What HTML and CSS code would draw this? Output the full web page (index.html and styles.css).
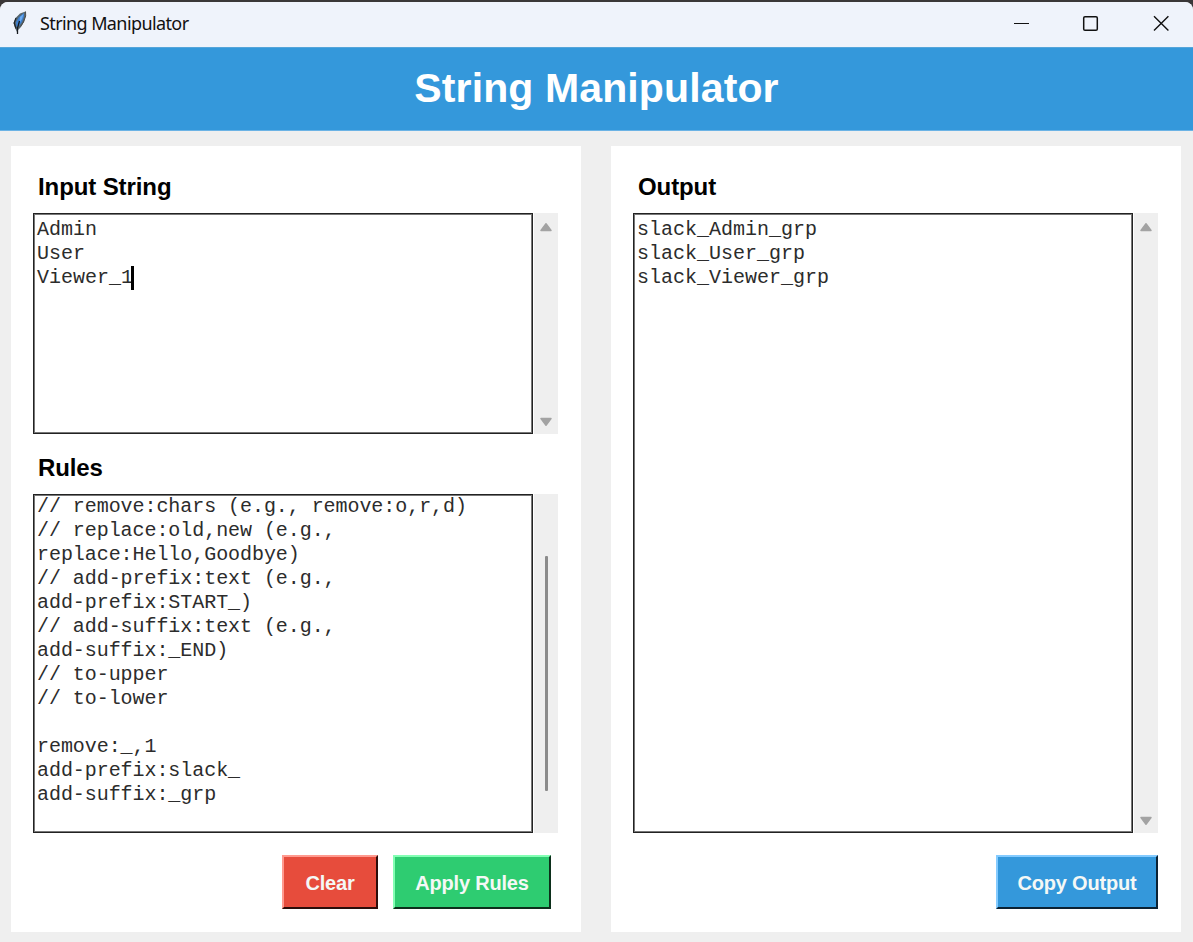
FILE: index.html
```html
<!DOCTYPE html>
<html lang="en">
<head>
<meta charset="utf-8">
<title>String Manipulator</title>
<link rel="stylesheet" href="styles.css">
</head>
<body>
<div class="window">
  <header class="titlebar">
    <svg class="feather" width="16" height="26" viewBox="0 0 16 26">
      <path d="M5 22 3 18 1.500 13 3.500 8 8 3.500 13.500 1.500 13.500 6 12 12 9 17 6 20Z" fill="#56666f"/>
      <path d="M4.500 17 4 12 7 7 12 3 12 6.500 10 12 7 16Z" fill="#3c7fd0"/>
      <path d="M8 7 11.500 4 10 9 7.500 13Z" fill="#6aaaf0"/>
      <path d="M13.500 1.500 13.700 6 11.500 12 8.500 16.500" fill="none" stroke="#4a4c4e" stroke-width="1"/>
      <path d="M7.500 11 5.500 18 5.500 24" fill="none" stroke="#15191d" stroke-width="1.300"/>
      <path d="M4 8 2.200 13 4 18.500" fill="none" stroke="#1f2327" stroke-width="1.200"/>
    </svg>
    <span class="caption">String Manipulator</span>
    <svg class="controls" width="160" height="20" viewBox="0 0 160 20" fill="none" stroke="#111">
      <path d="M1 10.5H16" stroke-width="1.1"/>
      <rect x="70.7" y="3.7" width="13.6" height="13.6" rx="1.3" stroke-width="1.5"/>
      <path d="M141 3.2 155.400 17.600M155.400 3.200 141 17.600" stroke-width="1.4"/>
    </svg>
  </header>
  <div class="banner"><h1>String Manipulator</h1></div>
  <main class="content">
    <section class="panel">
      <h2>Input String</h2>
      <div class="field field-input">
        <pre class="text">Admin
User
Viewer_1<span class="caret"></span></pre>
        <div class="scrollbar">
          <svg width="14" height="10" viewBox="0 0 14 10"><path d="M2 8.500 7 1.800 12 8.500Z" class="arrow"/></svg>
          <svg width="14" height="10" viewBox="0 0 14 10"><path d="M2 1.500 7 8.200 12 1.500Z" class="arrow"/></svg>
        </div>
      </div>
      <h2 class="rules-title">Rules</h2>
      <div class="field field-rules">
        <pre class="text">// remove:chars (e.g., remove:o,r,d)
// replace:old,new (e.g.,
replace:Hello,Goodbye)
// add-prefix:text (e.g.,
add-prefix:START_)
// add-suffix:text (e.g.,
add-suffix:_END)
// to-upper
// to-lower

remove:_,1
add-prefix:slack_
add-suffix:_grp</pre>
        <div class="scrollbar scrollbar-thumb"><div class="thumb"></div></div>
      </div>
      <div class="actions actions-left">
        <button class="btn btn-clear">Clear</button>
        <button class="btn btn-apply">Apply Rules</button>
      </div>
    </section>
    <section class="panel">
      <h2>Output</h2>
      <div class="field field-output">
        <pre class="text">slack_Admin_grp
slack_User_grp
slack_Viewer_grp</pre>
        <div class="scrollbar">
          <svg width="14" height="10" viewBox="0 0 14 10"><path d="M2 8.500 7 1.800 12 8.500Z" class="arrow"/></svg>
          <svg width="14" height="10" viewBox="0 0 14 10"><path d="M2 1.500 7 8.200 12 1.500Z" class="arrow"/></svg>
        </div>
      </div>
      <div class="actions">
        <button class="btn btn-copy">Copy Output</button>
      </div>
    </section>
  </main>
</div>
</body>
</html>
```

FILE: styles.css
```css
* { box-sizing: border-box; }
body { margin: 0; background: #3a3738; font-family: "Liberation Sans", Arial, sans-serif; overflow: hidden; }
.window { width: 1193px; height: 940px; margin-top: 2px; background: #efefef; border-radius: 8px 8px 0 0; overflow: hidden; }
.titlebar { height: 45px; background: #eff3fb; display: flex; align-items: center; padding: 0 20px 4px 12px; }
.feather { display: block; margin-right: 12px; }
.caption { font: 18px/26px "Noto Sans", sans-serif; letter-spacing: -0.6px; color: #111; white-space: nowrap; }
.controls { margin-left: auto; }
.banner { height: 84px; background: #3498db; border-top: 1px solid #55a5da; border-bottom: 1px solid #6bb3e5; display: flex; justify-content: center; }
h1 { margin: 0; color: #fff; font-size: 41px; line-height: 80px; letter-spacing: 0.12px; white-space: nowrap; }
.content { display: flex; gap: 30px; padding: 15px 12px 0 11px; }
.panel { width: 570px; height: 786px; background: #fff; padding: 26px 22px 0; }
h2 { margin: 0 0 11px 5px; font-size: 24px; line-height: 30px; letter-spacing: -0.1px; color: #000; white-space: nowrap; }
.rules-title { margin-top: 19px; }
.field { display: flex; gap: 1px; width: 525px; }
.field-input { height: 221px; }
.field-rules { height: 339px; }
.field-output { height: 620px; }
.text { width: 500px; margin: 0; padding: 4px 0 0 3px; border: 1px solid #222; box-shadow: inset 0 0 0 1px #777; font: 20px/24px "Liberation Mono", monospace; color: #2c2c2c; overflow: hidden; }
.field-rules .text { padding-top: 0; letter-spacing: -0.06px; }
.caret { display: inline-block; width: 3px; height: 24px; margin-left: -2px; background: #000; vertical-align: top; }
.scrollbar { width: 24px; background: #efefef; display: flex; flex-direction: column; align-items: center; justify-content: space-between; padding: 9px 0 7px; }
.arrow { fill: #a3a3a3; stroke: #a3a3a3; stroke-width: 1.5; stroke-linejoin: round; }
.scrollbar-thumb { padding: 62px 0 0; justify-content: flex-start; }
.thumb { width: 3px; height: 235px; background: #8b8b8b; border-radius: 1px; }
.actions { display: flex; justify-content: flex-end; gap: 15px; margin-top: 22px; }
.actions-left { padding-right: 8px; }
.field-output + .actions { padding-right: 0; width: 525px; }
.actions-left { width: 526px; }
.btn { height: 54px; padding: 2px 0 0; border: 2px solid; color: #f4f8f6; font: bold 20px/48px "Liberation Sans", Arial, sans-serif; white-space: nowrap; letter-spacing: -0.2px; }
.btn-clear { width: 96px; background: #e74c3c; border-color: #ff9a8f #2c0d0a #2c0d0a #ff9a8f; }
.btn-apply { width: 158px; background: #2ecc71; border-color: #83ffb4 #0c2f1b #0c2f1b #83ffb4; }
.btn-copy { width: 162px; background: #3498db; border-color: #84cbff #0b2233 #0b2233 #84cbff; }
```
